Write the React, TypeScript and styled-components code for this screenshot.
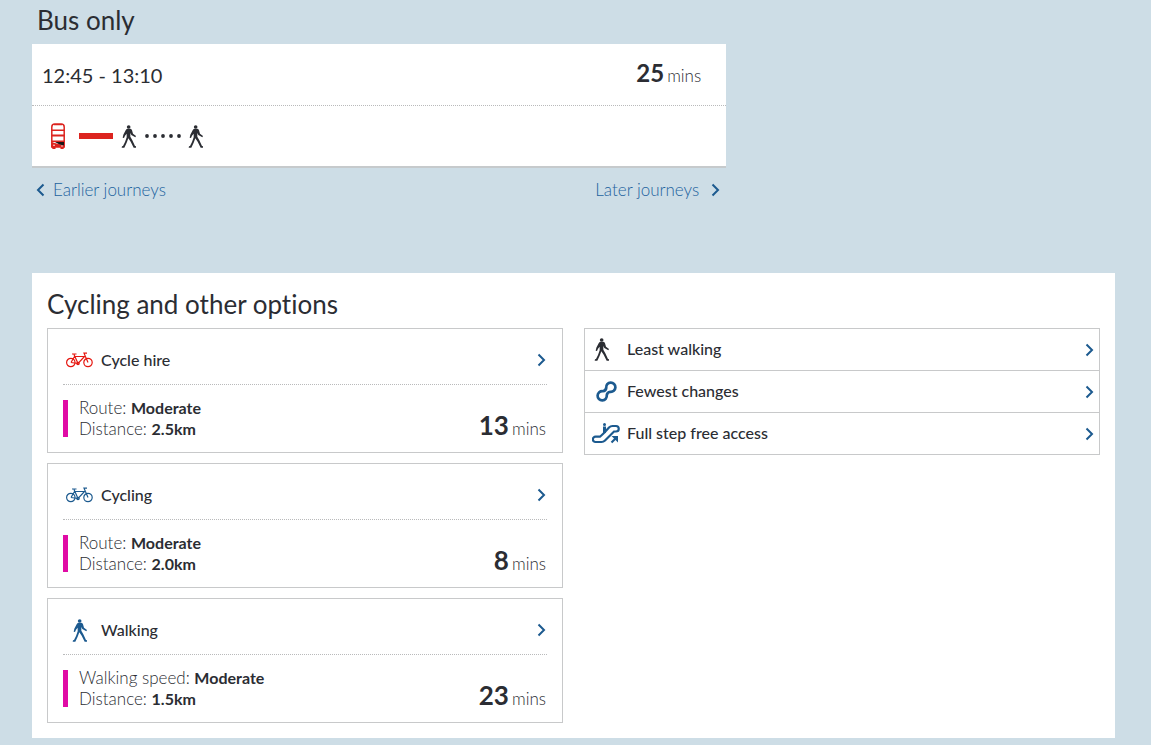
import React from 'react';
import styled, { createGlobalStyle } from 'styled-components';

const ink = '#2b2d33';
const blue = '#1c5a8f';
const link = '#1d639e';
const line = '#c8c9ca';

const GlobalStyle = createGlobalStyle`
  *, *::before, *::after { box-sizing: border-box; }
  body {
    margin: 0;
    background: #cddde6;
    color: ${ink};
    font-family: Lato, "Liberation Sans", sans-serif;
    font-size: 16px;
    line-height: 21px;
    font-variant-ligatures: none;
  }
`;

const Page = styled.main`
  padding: 5px 36px 7px 32px;
`;

const Heading = styled.h2<{ $inset: number }>`
  margin: 0;
  padding-left: ${p => p.$inset}px;
  font-size: 26px;
  font-weight: 400;
  line-height: 30px;
`;

const BusSection = styled.section`
  width: 64.1%;
`;

const JourneyCard = styled.article`
  margin-top: 9px;
  background: #fff;
  border-bottom: 2px solid #c6cacc;
`;

const JourneyTop = styled.div`
  display: flex;
  align-items: center;
  justify-content: space-between;
  height: 62px;
  padding: 0 25px 0 10px;
  border-bottom: 1px dotted #b9babb;
`;

const Times = styled.span`
  font-size: 20px;
  line-height: 28px;
`;

const JourneyLegs = styled.div`
  display: flex;
  align-items: center;
  height: 60px;
  padding-left: 18px;
`;

const BusLine = styled.span`
  width: 34px;
  height: 6px;
  margin: 0 8px 0 13px;
  background: #dc241f;
`;

const Duration = styled.span`
  padding-bottom: 4px;
  font-size: 17px;
  font-weight: 300;
  white-space: nowrap;
`;

const Minutes = styled.strong<{ $large?: boolean }>`
  margin-right: 3px;
  font-size: ${p => (p.$large ? 26 : 24)}px;
  font-weight: 700;
  line-height: 28px;
`;

const Pager = styled.nav`
  display: flex;
  justify-content: space-between;
  padding: 11px 6px 0 4px;
`;

const PagerLink = styled.a<{ $gap: number }>`
  display: flex;
  align-items: center;
  gap: ${p => p.$gap}px;
  color: ${link};
  font-size: 17px;
  font-weight: 300;
  text-decoration: none;
`;

const Panel = styled.section`
  margin-top: 73px;
  padding: 16px 15px 15px;
  background: #fff;
`;

const Columns = styled.div`
  display: grid;
  grid-template-columns: 1fr 1fr;
  align-items: start;
  gap: 21px;
  margin-top: 9px;
`;

const Stack = styled.div`
  display: grid;
  gap: 10px;
`;

const OptionCard = styled.a`
  display: block;
  padding: 0 15px;
  border: 1px solid ${line};
  color: inherit;
  text-decoration: none;
`;

const OptionTop = styled.div`
  display: flex;
  align-items: center;
  height: 56px;
  padding: 7px 1px 0 2px;
  border-bottom: 1px dotted #b9babb;
`;

const IconSlot = styled.span<{ $width: number }>`
  display: flex;
  flex: none;
  justify-content: center;
  width: ${p => p.$width}px;
`;

const Label = styled.span`
  flex: 1;
  padding: 0 0 2px 8px;
  font-weight: 500;
`;

const OptionBody = styled.div`
  display: flex;
  align-items: center;
  height: 67px;
  padding-right: 1px;
`;

const Marker = styled.span`
  width: 5px;
  height: 37px;
  margin-right: 11px;
  background: #e00ba5;
`;

const Details = styled.div`
  flex: 1;
  padding-bottom: 2px;
  font-size: 17px;
  font-weight: 300;

  strong {
    font-size: 16px;
    font-weight: 700;
  }
`;

const BodyDuration = styled(Duration)`
  align-self: flex-end;
  padding-bottom: 13px;
`;

const Preferences = styled.ul`
  margin: 0;
  padding: 0;
  list-style: none;
  border: 1px solid ${line};
`;

const Preference = styled.li`
  & + & { border-top: 1px solid ${line}; }
`;

const PreferenceLink = styled.a`
  display: flex;
  align-items: center;
  height: 41px;
  padding: 0 5px 0 7px;
  color: inherit;
  text-decoration: none;
`;

const PreferenceIcon = styled.span`
  flex: none;
  width: 27px;
`;

const Svg = styled.svg`
  display: block;
  flex: none;
`;

const Walker = ({ color = ink }: { color?: string }) => (
  <Svg width="15" height="23" viewBox="0 0 45 69" fill={color} aria-hidden="true">
    <circle cx="23" cy="6" r="5.5" />
    <path d="M18 11h10q4 1 5 5l3 10 9 7-2 4-12-7-3-6 0 11 6 11 8 17 4 1v4h-8l-9-18-7-10-5 13-7 15h-8l1-4 3-1 6-12 5-14V26l-5 6-3 7-4-1 2-9 7-13q2-5 5-5z" />
  </Svg>
);

const Chevron = ({ back, color = blue }: { back?: boolean; color?: string }) => (
  <Svg width="9" height="14" viewBox="0 0 9 14" fill="none" stroke={color} strokeWidth="2" aria-hidden="true">
    <path d={back ? 'M7.5 1.5 2 7l5.5 5.5' : 'M1.5 1.5 7 7l-5.5 5.5'} />
  </Svg>
);

const Bus = () => (
  <Svg width="16" height="26" viewBox="0 0 16 26" aria-hidden="true">
    <path d="M1.800 24V4q0-3 3-3h6.400q3 0 3 3v20z" fill="#fff" stroke="#dc241f" strokeWidth="1.5" />
    <path d="M4 1h8v1.300H4zM1.500 6.500h13V8h-13zM1.500 11.500h13v2h-13zM1.500 17.500h13v1.500h-13zM1.500 19l5 1.500 8 2V24h-13zM1.500 23h4v3h-3zM10.500 23h4l-1 3h-3z" fill="#dc241f" />
    <path d="M5 19h9v3.500L9.500 21.500z" fill="#161616" />
    <circle cx="4" cy="22.200" r=".8" fill="#fff" />
    <circle cx="12" cy="23" r=".7" fill="#fff" />
  </Svg>
);

const Dots = () => (
  <Svg width="36" height="4" viewBox="0 0 36 4" fill={ink} aria-hidden="true">
    {[2, 10, 18, 26, 34].map(x => <circle key={x} cx={x} cy="2" r="1.9" />)}
  </Svg>
);

const LegGap = styled.span`
  padding: 0 7px 1px 9px;
`;

const Bike = ({ color }: { color: string }) => (
  <Svg width="27" height="16" viewBox="0 0 27 16" fill="none" stroke={color} strokeWidth="1.2" aria-hidden="true">
    <circle cx="4.8" cy="10.5" r="4.2" />
    <circle cx="22" cy="10.5" r="4.2" />
    <path d="M5 10.500 8.500 4.500h10L12 11.500 8 2.500M5 10.500l7 1M22 10.500 18 1.200h3M6 2h4.500" />
    <circle cx="12" cy="11.500" r="1.2" />
  </Svg>
);

const Changes = () => (
  <Svg width="21" height="21" viewBox="0 0 21 21" fill="none" stroke={blue} strokeWidth="2.7" aria-hidden="true">
    <path d="M10.230 6.760A4.600 4.600 0 1 1 14.240 10.770Q11.100 11.100 10.770 14.240A4.600 4.600 0 1 1 6.760 10.230Q9.900 9.900 10.230 6.760z" />
  </Svg>
);

const Escalator = () => (
  <Svg width="28" height="21" viewBox="0 0 28 21" fill="none" stroke={blue} strokeWidth="2.2" aria-hidden="true">
    <path d="M12 10 17 4.500Q18.500 3 20.500 3H24a2.700 2.700 0 0 1 0 5.500h-2L13 17.500Q11.500 19 9.500 19H3.500a2.600 2.600 0 0 1 0-5.300H8l4-3.700" />
    <path d="M12.500 3.500V10" strokeWidth="3" />
    <circle cx="12.5" cy="1.5" r="1.5" fill={blue} stroke="none" />
    <path d="M19.500 19.500 24 15" />
    <path d="M19.500 13H26v6.500z" fill={blue} stroke="none" />
  </Svg>
);

const options = [
  { name: 'Cycle hire', icon: <Bike color="#e5160f" />, field: 'Route', value: 'Moderate', distance: '2.5km', mins: 13 },
  { name: 'Cycling', icon: <Bike color={blue} />, field: 'Route', value: 'Moderate', distance: '2.0km', mins: 8 },
  { name: 'Walking', icon: <Walker color={blue} />, field: 'Walking speed', value: 'Moderate', distance: '1.5km', mins: 23 },
];

const preferences = [
  { name: 'Least walking', icon: <Walker />, width: 18 },
  { name: 'Fewest changes', icon: <Changes />, width: 28 },
  { name: 'Full step free access', icon: <Escalator />, width: 28 },
];

export default function App() {
  return (
    <>
      <GlobalStyle />
      <Page>
        <BusSection>
          <Heading $inset={5}>Bus only</Heading>
          <JourneyCard>
            <JourneyTop>
              <Times>12:45 - 13:10</Times>
              <Duration><Minutes>25</Minutes>mins</Duration>
            </JourneyTop>
            <JourneyLegs>
              <Bus />
              <BusLine />
              <Walker />
              <LegGap><Dots /></LegGap>
              <Walker />
            </JourneyLegs>
          </JourneyCard>
          <Pager aria-label="Journey times">
            <PagerLink href="#earlier" $gap={8}><Chevron back />Earlier journeys</PagerLink>
            <PagerLink href="#later" $gap={12}>Later journeys<Chevron /></PagerLink>
          </Pager>
        </BusSection>

        <Panel>
          <Heading $inset={0}>Cycling and other options</Heading>
          <Columns>
            <Stack>
              {options.map(o => (
                <OptionCard key={o.name} href="#option">
                  <OptionTop>
                    <IconSlot $width={28}>{o.icon}</IconSlot>
                    <Label>{o.name}</Label>
                    <Chevron />
                  </OptionTop>
                  <OptionBody>
                    <Marker />
                    <Details>
                      <div>{o.field}: <strong>{o.value}</strong></div>
                      <div>Distance: <strong>{o.distance}</strong></div>
                    </Details>
                    <BodyDuration><Minutes $large>{o.mins}</Minutes>mins</BodyDuration>
                  </OptionBody>
                </OptionCard>
              ))}
            </Stack>
            <Preferences>
              {preferences.map(p => (
                <Preference key={p.name}>
                  <PreferenceLink href="#preference">
                    <PreferenceIcon><IconSlot $width={p.width}>{p.icon}</IconSlot></PreferenceIcon>
                    <Label>{p.name}</Label>
                    <Chevron />
                  </PreferenceLink>
                </Preference>
              ))}
            </Preferences>
          </Columns>
        </Panel>
      </Page>
    </>
  );
}
